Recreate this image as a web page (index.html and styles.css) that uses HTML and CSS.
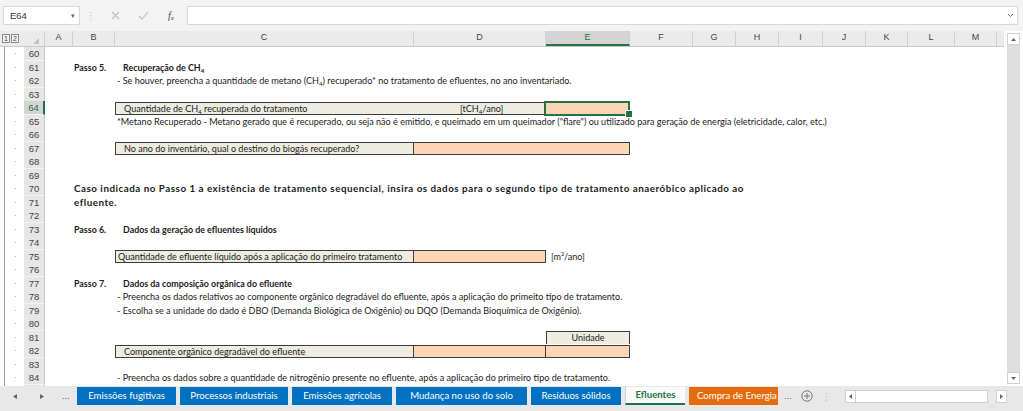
FILE: index.html
```html
<!DOCTYPE html>
<html lang="pt">
<head>
<meta charset="utf-8">
<title>Efluentes</title>
<link rel="stylesheet" href="styles.css">
</head>
<body>
<div class="app">
  <div class="fbar">
    <div class="namebox"><span>E64</span><span class="dd">▾</span></div>
    <div class="fxicons">
      <span class="vdots">⋮</span>
      <svg width="9" height="9" viewBox="0 0 9 9"><path d="M1 1L8 8M8 1L1 8" stroke="#bdbdbd" stroke-width="1.1" fill="none"/></svg>
      <svg width="11" height="9" viewBox="0 0 11 9"><path d="M1 5L4 8L10 1" stroke="#bdbdbd" stroke-width="1.1" fill="none"/></svg>
      <span class="fx">f<sub>x</sub></span>
    </div>
    <div class="formula"><svg width="7" height="5" viewBox="0 0 7 5"><path d="M1 1L3.5 3.5L6 1" stroke="#666" stroke-width="1" fill="none"/></svg></div>
  </div>

  <div class="main">
    <div class="sheet">
      <div class="colhdr">
        <div class="ch olh"><span class="lvl">1</span><span class="lvl">2</span></div>
        <div class="ch corner"><span class="tri"></span></div>
        <div class="ch">A</div>
        <div class="ch">B</div>
        <div class="ch">C</div>
        <div class="ch">D</div>
        <div class="ch csel">E</div>
        <div class="ch">F</div>
        <div class="ch">G</div>
        <div class="ch">H</div>
        <div class="ch">I</div>
        <div class="ch">J</div>
        <div class="ch">K</div>
        <div class="ch">L</div>
        <div class="ch">M</div>
        <div class="ch last"></div>
      </div>

      <div class="rows">
        <div class="row"><div class="ol">·</div><div class="rh">60</div></div>
        <div class="row"><div class="ol">·</div><div class="rh">61</div>
          <div class="t cb b">Passo 5.</div><div class="t cc ind b">Recuperação de CH<sub>4</sub></div></div>
        <div class="row"><div class="ol">·</div><div class="rh">62</div>
          <div class="t cc">- Se houver, preencha a quantidade de metano (CH<sub>4</sub>) recuperado* no tratamento de efluentes, no ano inventariado.</div></div>
        <div class="row"><div class="ol">·</div><div class="rh">63</div></div>
        <div class="row"><div class="ol">·</div><div class="rh rsel">64</div>
          <div class="box lbl ccd"><span class="bt">Quantidade de CH<sub>4</sub> recuperada do tratamento</span><span class="unit">[tCH<sub>4</sub>/ano]</span></div>
          <div class="box inp ce sel"></div></div>
        <div class="row"><div class="ol">·</div><div class="rh">65</div>
          <div class="t cc">*Metano Recuperado - Metano gerado que é recuperado, ou seja não é emitido, e queimado em um queimador ("flare") ou utilizado para geração de energia (eletricidade, calor, etc.)</div></div>
        <div class="row"><div class="ol">·</div><div class="rh">66</div></div>
        <div class="row"><div class="ol">·</div><div class="rh">67</div>
          <div class="box lbl cc"><span class="bt">No ano do inventário, qual o destino do biogás recuperado?</span></div>
          <div class="box inp cde"></div></div>
        <div class="row"><div class="ol">·</div><div class="rh">68</div></div>
        <div class="row"><div class="ol">·</div><div class="rh">69</div></div>
        <div class="row"><div class="ol">·</div><div class="rh">70</div>
          <div class="t cbx b big">Caso indicada no Passo 1 a existência de tratamento sequencial, insira os dados para o segundo tipo de tratamento anaeróbico aplicado ao</div></div>
        <div class="row"><div class="ol">·</div><div class="rh">71</div>
          <div class="t cb b big">efluente.</div></div>
        <div class="row"><div class="ol">·</div><div class="rh">72</div></div>
        <div class="row"><div class="ol">·</div><div class="rh">73</div>
          <div class="t cb b">Passo 6.</div><div class="t cc ind b">Dados da geração de efluentes líquidos</div></div>
        <div class="row"><div class="ol">·</div><div class="rh">74</div></div>
        <div class="row"><div class="ol">·</div><div class="rh">75</div>
          <div class="box lbl cc"><span class="bt sm">Quantidade de efluente líquido após a aplicação do primeiro tratamento</span></div>
          <div class="box inp cd"></div>
          <div class="t ce unit2">[m³/ano]</div></div>
        <div class="row"><div class="ol">·</div><div class="rh">76</div></div>
        <div class="row"><div class="ol">·</div><div class="rh">77</div>
          <div class="t cb b">Passo 7.</div><div class="t cc ind b">Dados da composição orgânica do efluente</div></div>
        <div class="row"><div class="ol">·</div><div class="rh">78</div>
          <div class="t cc">- Preencha os dados relativos ao componente orgânico degradável do efluente, após a aplicação do primeito tipo de tratamento.</div></div>
        <div class="row"><div class="ol">·</div><div class="rh">79</div>
          <div class="t cc">- Escolha se a unidade do dado é DBO (Demanda Biológica de Oxigênio) ou DQO (Demanda Bioquímica de Oxigênio).</div></div>
        <div class="row"><div class="ol">·</div><div class="rh">80</div></div>
        <div class="row"><div class="ol">·</div><div class="rh">81</div>
          <div class="box lbl ce head"><span class="bt ctr">Unidade</span></div></div>
        <div class="row"><div class="ol">·</div><div class="rh">82</div>
          <div class="box lbl cc"><span class="bt">Componente orgânico degradável do efluente</span></div>
          <div class="box inp cd"></div>
          <div class="box inp ce"></div></div>
        <div class="row"><div class="ol">·</div><div class="rh">83</div></div>
        <div class="row"><div class="ol">·</div><div class="rh">84</div>
          <div class="t cc">- Preencha os dados sobre a quantidade de nitrogênio presente no efluente, após a aplicação do primeiro tipo de tratamento.</div></div>
        <div class="row"><div class="ol">·</div><div class="rh">85</div>
          <div class="t cc">- Preencha o fator de emissão de N<sub>2</sub>O do efluente.</div></div>
      </div>
    </div>
    <div class="vscroll">
      <div class="arrow up"><svg width="5" height="3" viewBox="0 0 5 3"><path d="M0 3L2.5 0L5 3Z" fill="#666"/></svg></div>
      <div class="track"></div>
      <div class="arrow down"><svg width="5" height="3" viewBox="0 0 5 3"><path d="M0 0L2.5 3L5 0Z" fill="#666"/></svg></div>
    </div>
  </div>

  <div class="tabs">
    <div class="nav">
      <svg width="4" height="5" viewBox="0 0 4 5"><path d="M4 0L0 2.5L4 5Z" fill="#666"/></svg>
      <svg width="4" height="5" viewBox="0 0 4 5"><path d="M0 0L4 2.5L0 5Z" fill="#666"/></svg>
      <span class="more">...</span>
    </div>
    <div class="tablist">
      <div class="tab w1">Emissões fugitivas</div>
      <div class="tab w2">Processos industriais</div>
      <div class="tab w3">Emissões agrícolas</div>
      <div class="tab w4">Mudança no uso do solo</div>
      <div class="tab w5">Resíduos sólidos</div>
      <div class="tab active w6">Efluentes</div>
      <div class="tab orange w7">Compra de Energia</div>
    </div>
    <div class="tabtools">
      <span class="more">...</span>
      <svg width="12" height="12" viewBox="0 0 12 12"><circle cx="6" cy="6" r="5.2" stroke="#777" stroke-width="1" fill="none"/><path d="M6 3V9M3 6H9" stroke="#777" stroke-width="1"/></svg>
      <span class="vdots">⋮</span>
    </div>
    <div class="hscroll">
      <div class="harrow"><svg width="3" height="5" viewBox="0 0 3 5"><path d="M3 0L0 2.5L3 5Z" fill="#666"/></svg></div>
      <div class="htrack"></div>
      <div class="harrow r"><svg width="3" height="5" viewBox="0 0 3 5"><path d="M0 0L3 2.5L0 5Z" fill="#666"/></svg></div>
    </div>
  </div>
</div>
</body>
</html>
```

FILE: styles.css
```css
* { box-sizing: border-box; }

html, body {
  margin: 0;
  width: 1023px;
  height: 411px;
  overflow: hidden;
  background: #fff;
  font-family: Lato, "Open Sans", sans-serif;
}

.app {
  --cols: 24px 21px 28px 42px 299px 132px 84px 63px 43px 43px 44px 43px 42px 47px 42px 1fr;
  display: flex;
  flex-direction: column;
  width: 1023px;
  height: 411px;
}

/* ---------- formula bar ---------- */
.fbar {
  flex: 0 0 31px;
  display: flex;
  align-items: center;
  background: #f3f3f3;
  padding: 0 5px 0 3px;
}
.namebox {
  width: 77px;
  height: 19px;
  background: #fff;
  border: 1px solid #d9d9d9;
  display: flex;
  align-items: center;
  justify-content: space-between;
  padding: 0 4px 0 6px;
  font: 9.5px "Liberation Sans", sans-serif;
  color: #333;
}
.namebox .dd { font-size: 7px; color: #666; }
.fxicons {
  width: 107px;
  display: grid;
  grid-template-columns: 22px 26px 30px 26px;
  align-items: center;
  justify-items: center;
}
.vdots { color: #c4c4c4; font: 10px "DejaVu Sans", sans-serif; }
.fx {
  font: italic 10px "Liberation Serif", serif;
  color: #444;
}
.fx sub { font-size: 7px; vertical-align: -1px; }
.formula {
  flex: 1;
  height: 19px;
  background: #fff;
  border: 1px solid #d9d9d9;
  display: flex;
  align-items: center;
  justify-content: flex-end;
  padding-right: 3px;
}

/* ---------- sheet ---------- */
.main {
  flex: 1;
  display: flex;
  min-height: 0;
}
.sheet {
  flex: 1;
  display: flex;
  flex-direction: column;
  min-width: 0;
}
.colhdr {
  flex: 0 0 14px;
  display: grid;
  grid-template-columns: var(--cols);
  background: #ebebeb;
  border-bottom: 1px solid #c9c9c9;
}
.ch {
  border-right: 1px solid #d2d2d2;
  font: 9px "Liberation Sans", sans-serif;
  color: #444;
  text-align: center;
  line-height: 13px;
}
.ch.last { border-right: none; }
.ch.olh {
  border-right: none;
  display: flex;
  align-items: center;
  padding-left: 2px;
  gap: 1px;
}
.lvl {
  width: 8px;
  height: 9px;
  border: 1px solid #8a8a8a;
  font-size: 7px;
  line-height: 7px;
  color: #444;
  text-align: center;
  background: #f4f4f4;
}
.corner {
  display: flex;
  align-items: flex-end;
  justify-content: flex-end;
  padding: 0 5px 2px 0;
}
.tri {
  width: 0;
  height: 0;
  border-left: 6px solid transparent;
  border-bottom: 6px solid #c2c2c2;
}
.ch.csel {
  background: #d4d4d4;
  border-bottom: 2px solid #217346;
  color: #217346;
}

.rows {
  flex: 1;
  overflow: hidden;
}
.row {
  display: grid;
  grid-template-columns: var(--cols);
  height: 13.5px;
  font-size: 9.05px;
  line-height: 13.5px;
  color: #1a1a1a;
}
.ol {
  grid-column: 1;
  background: linear-gradient(#a0a0a0, #a0a0a0) 4px 0 / 1px 100% no-repeat;
  color: #9a9a9a;
  text-align: right;
  padding-right: 7px;
  font: 9px "Liberation Sans", sans-serif;
  line-height: 13.5px;
}
.rh {
  grid-column: 2;
  background: #e6e6e6;
  border-bottom: 1px solid #f3f3f3;
  border-right: 1px solid #c6c6c6;
  font: 9.5px "Liberation Sans", sans-serif;
  line-height: 13px;
  color: #444;
  text-align: center;
}
.rh.rsel {
  background: #d4d4d4;
  border-right: 2px solid #217346;
  color: #217346;
}

.t {
  white-space: nowrap;
  padding-left: 2px;
}
.cb { grid-column: 4; padding-left: 1px; }
.cbx { grid-column: 4 / -1; padding-left: 1px; }
.cc { grid-column: 5; }
.cd { grid-column: 6; }
.ce { grid-column: 7; }
.ccd { grid-column: 5 / 7; }
.cde { grid-column: 6 / 8; }
.ind { padding-left: 8px; }
.b { font-weight: 700; font-size: 8.9px; }
.big { font-size: 9.8px; letter-spacing: 0.52px; }
sub { font-size: 0.7em; line-height: 0; vertical-align: -2px; }

.box {
  border: 1px solid #3d3d3d;
  height: 13px;
  margin-top: 0.5px;
  line-height: 11px;
  white-space: nowrap;
}
.box + .box { border-left: none; }
.lbl { background: #eeece1; }
.inp { background: #fcd5b4; }
.box.head { border-bottom: none; }
.bt { padding-left: 8px; }
.bt.sm { padding-left: 2px; }
.bt.ctr { display: block; text-align: center; padding-left: 0; }
.ccd { display: flex; }
.ccd .bt { width: 343px; }
.unit { padding-left: 1px; }
.unit2 { padding-left: 5px; }

.sel { position: relative; }
.sel::after {
  content: "";
  position: absolute;
  inset: -2px -1px -2px -2px;
  border: 2px solid #217346;
}
.sel::before {
  content: "";
  position: absolute;
  right: -4px;
  bottom: -4px;
  width: 6px;
  height: 6px;
  background: #217346;
  border: 1px solid #fff;
  z-index: 2;
}

/* ---------- vertical scrollbar ---------- */
.vscroll {
  flex: 0 0 19px;
  display: flex;
  flex-direction: column;
  padding: 2px 3px 2px 3px;
  background: #fff;
}
.arrow {
  flex: 0 0 12px;
  background: #fff;
  border: 1px solid #d0d0d0;
  display: flex;
  align-items: center;
  justify-content: center;
}
.track {
  flex: 1;
  background: #dedede;
}

/* ---------- tabs ---------- */
.tabs {
  flex: 0 0 25px;
  display: flex;
  align-items: flex-start;
  background: #e8e8e8;
  padding-top: 1px;
}
.nav {
  width: 77px;
  height: 18px;
  display: flex;
  align-items: center;
  padding-left: 13px;
  gap: 23px;
}
.nav .more { margin-left: -5px; }
.more { font: 9px "Liberation Sans", sans-serif; color: #555; }
.tablist {
  width: 701px;
  display: flex;
  gap: 4px;
  overflow: hidden;
}
.tab {
  flex: 0 0 auto;
  height: 18px;
  background: #0070c0;
  color: #fff;
  font-size: 9.6px;
  line-height: 18px;
  text-align: center;
  white-space: nowrap;
  overflow: hidden;
}
.w1 { width: 99px; }
.w2 { width: 108px; }
.w3 { width: 100px; }
.w4 { width: 131px; }
.w5 { width: 90px; }
.w6 { width: 60px; }
.w7 { width: 95px; text-align: left; padding-left: 8px; }
.tab.active {
  background: #fafafa;
  color: #217346;
  font-weight: 700;
  border-bottom: 2px solid #217346;
  border-left: 1px solid #cfcfcf;
  line-height: 16px;
}
.tab.orange { background: #e46c0a; }
.tabtools {
  width: 67px;
  height: 18px;
  display: flex;
  align-items: center;
  padding-left: 6px;
  gap: 9px;
}
.hscroll {
  width: 165px;
  height: 14px;
  margin-top: 2px;
  display: flex;
  align-items: center;
}
.harrow {
  width: 11px;
  height: 13px;
  background: #fff;
  border: 1px solid #d0d0d0;
  display: flex;
  align-items: center;
  justify-content: center;
}
.htrack {
  width: 132px;
  height: 13px;
  background: #fff;
  border: 1px solid #d0d0d0;
  border-left: none;
  margin-right: 8px;
}
```
